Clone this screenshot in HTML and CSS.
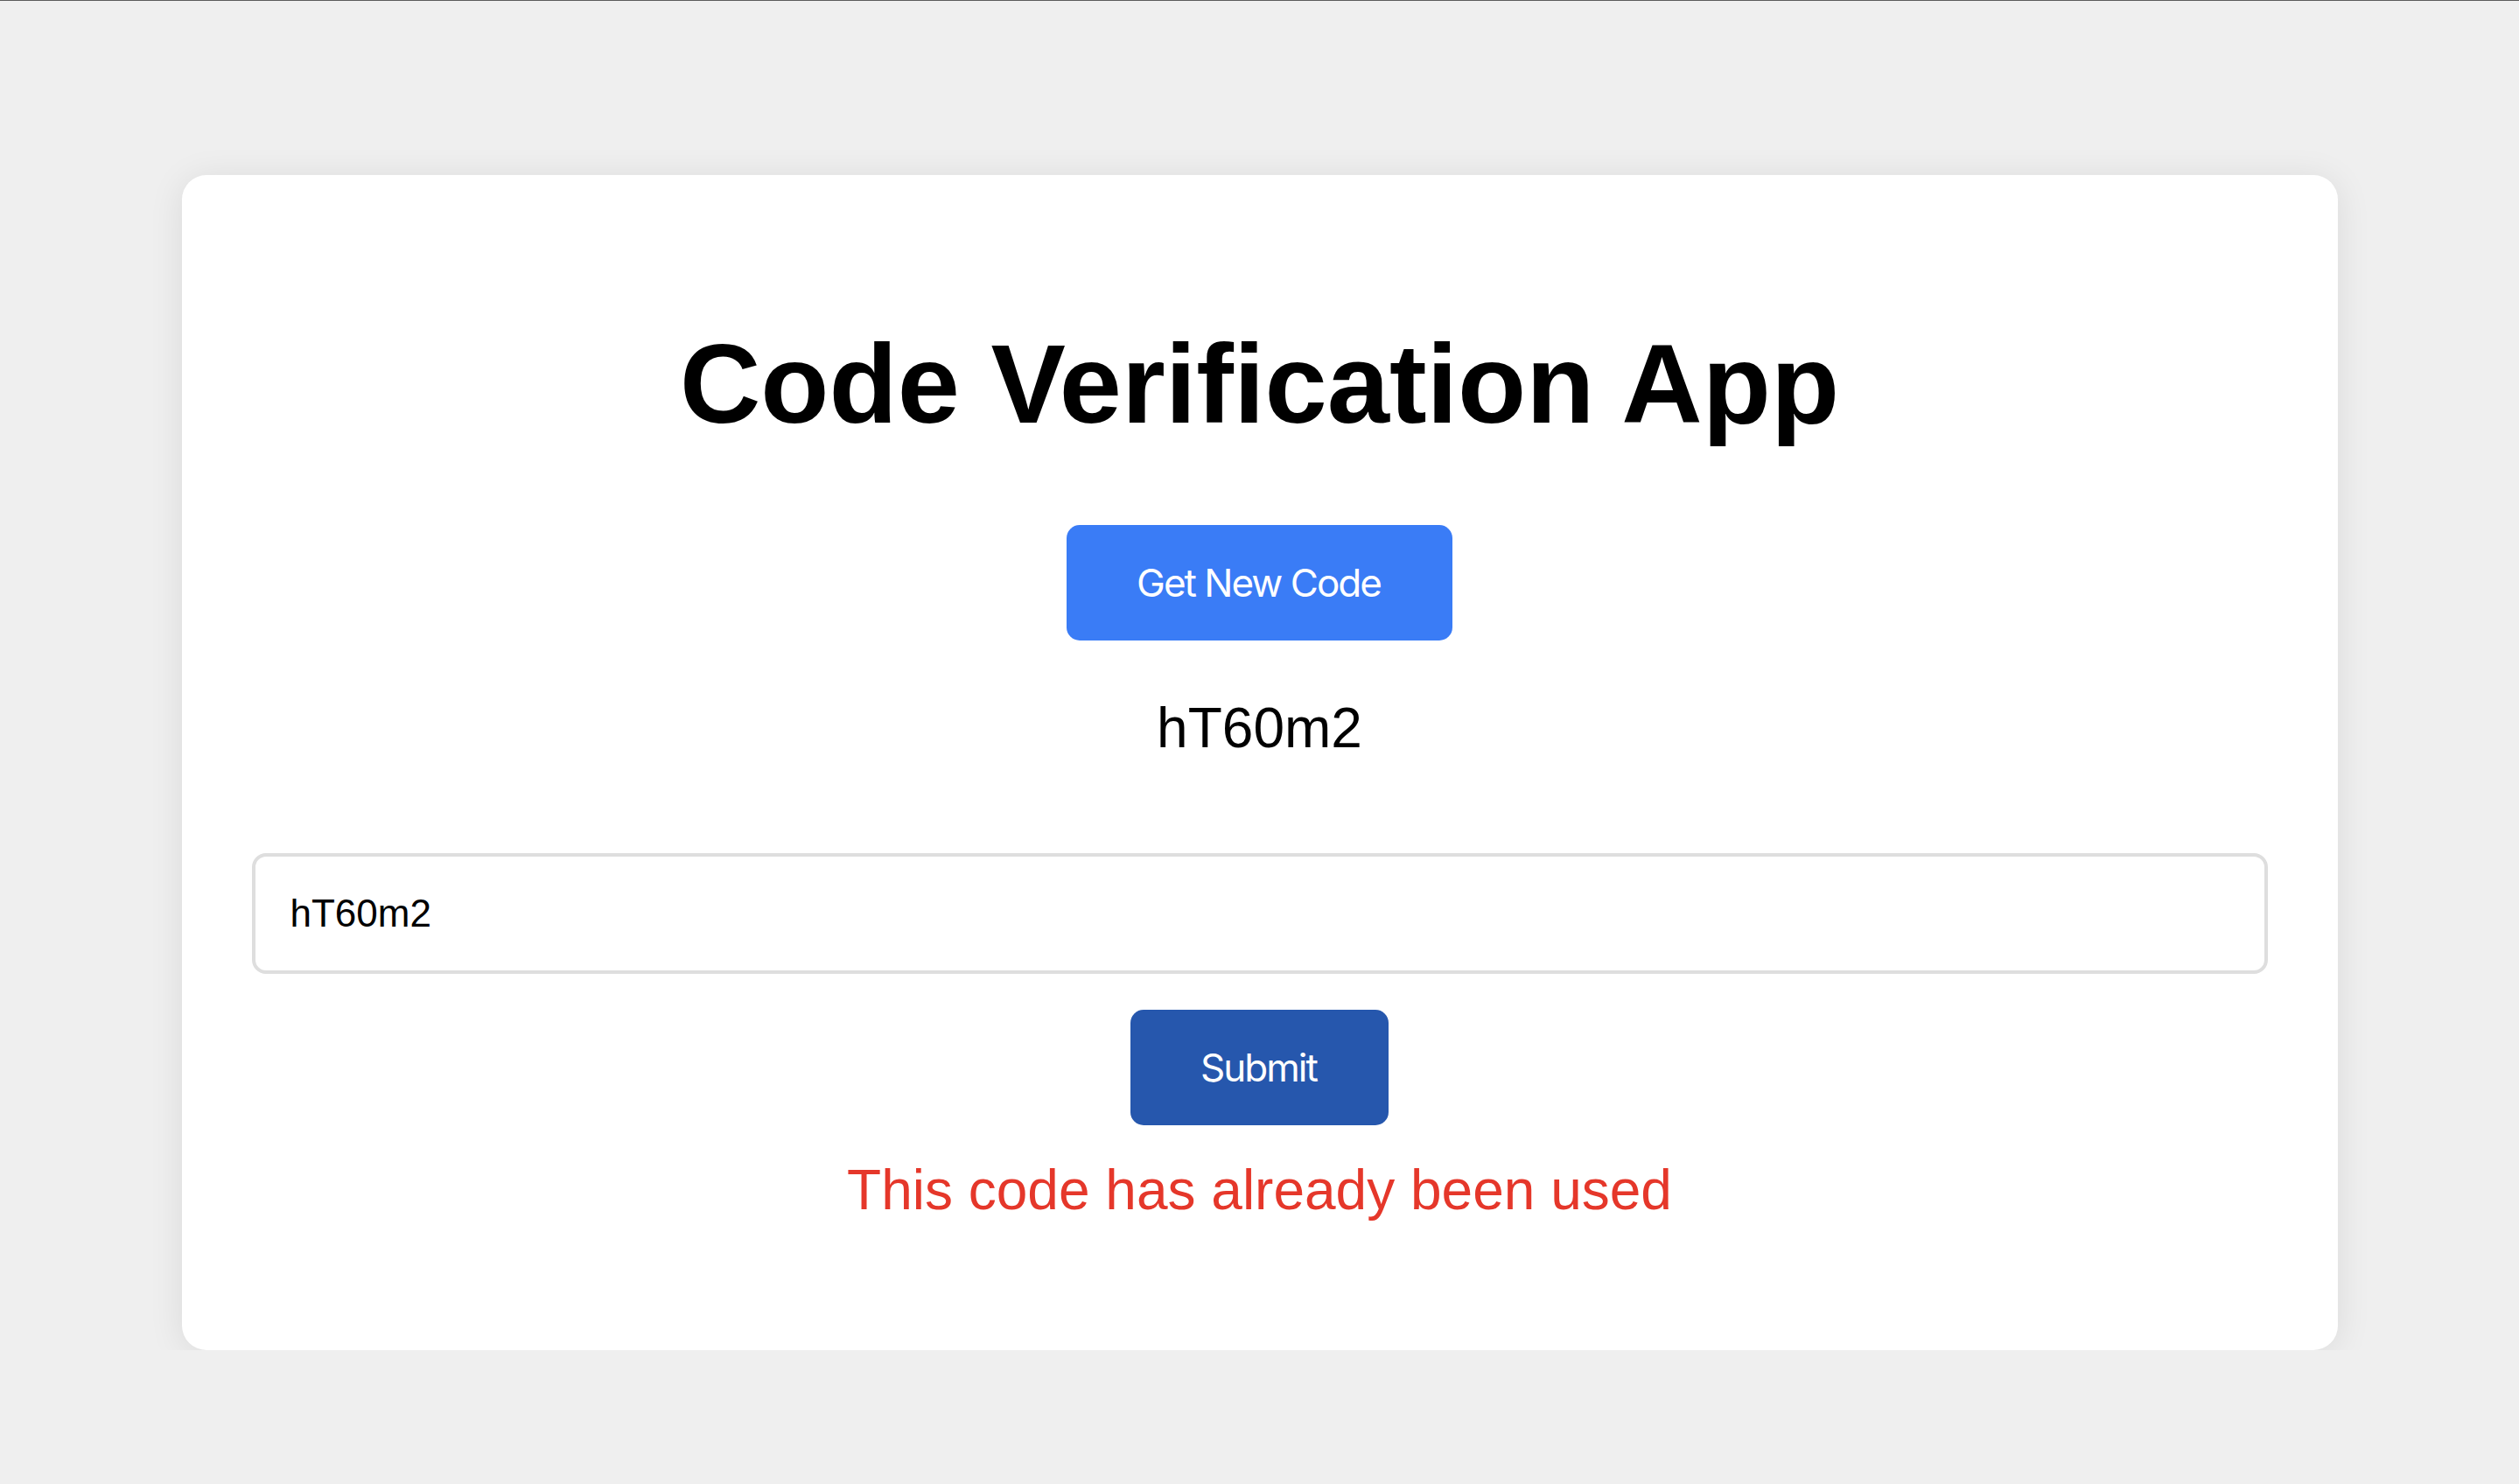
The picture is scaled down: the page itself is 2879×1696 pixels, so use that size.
FILE: index.html
```html
<!DOCTYPE html>
<html lang="en">
<head>
<meta charset="utf-8">
<title>Code Verification App</title>
<link rel="stylesheet" href="styles.css">
</head>
<body>
<main class="card">
  <h1 class="title">Code Verification App</h1>
  <button class="btn btn-primary" type="button">Get New Code</button>
  <p class="code">hT60m2</p>
  <input class="code-input" type="text" value="hT60m2">
  <button class="btn btn-submit" type="button">Submit</button>
  <p class="error">This code has already been used</p>
</main>
</body>
</html>
```
FILE: styles.css
```css
html, body {
  margin: 0;
  padding: 0;
}
body {
  background: #efefef;
  border-top: 1px solid #5c5c5c;
  padding-top: 199px;
  font-family: "Liberation Sans", Arial, sans-serif;
  color: #000;
}
.card {
  box-sizing: border-box;
  width: 2464px;
  margin: 0 auto;
  background: #fff;
  border-radius: 28px;
  box-shadow: 0 4px 40px rgba(0, 0, 0, 0.09);
  padding: 165px 80px 146px;
  display: flex;
  flex-direction: column;
  align-items: center;
}
.title {
  margin: 0;
  font-size: 128px;
  line-height: 1.15;
  font-weight: 700;
}
.btn {
  box-sizing: border-box;
  height: 132px;
  border: none;
  border-radius: 15px;
  color: #fff;
  font-family: Inter, "Noto Sans", sans-serif;
  font-size: 44px;
  letter-spacing: -2px;
  padding: 0 82px 0 80px;
  display: flex;
  align-items: center;
  justify-content: center;
}
.btn-primary {
  margin-top: 88px;
  background: #3a7cf6;
}
.code {
  margin: 64px 0 0;
  font-size: 64px;
  line-height: 1.15;
}
.code-input {
  box-sizing: border-box;
  align-self: stretch;
  margin-top: 105px;
  height: 138px;
  border: 4px solid #dedede;
  border-radius: 16px;
  padding: 0 40px;
  font-family: "Liberation Sans", Arial, sans-serif;
  font-size: 44px;
  color: #000;
  outline: none;
}
.btn-submit {
  margin-top: 41px;
  background: #2657ad;
}
.error {
  margin: 38px 0 0;
  font-size: 64px;
  line-height: 1.15;
  color: #e5372a;
}
```
